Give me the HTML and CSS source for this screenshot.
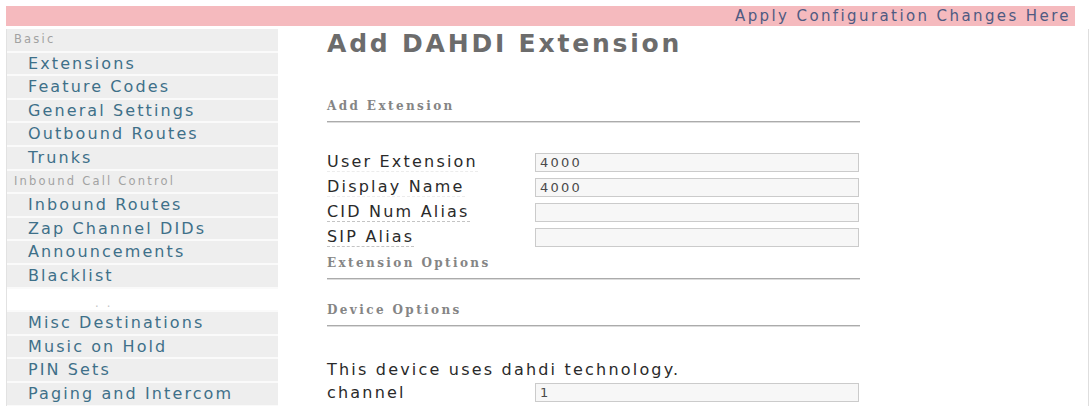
FILE: index.html
```html
<!DOCTYPE html>
<html>
<head>
    <title>Add DAHDI Extension</title>
    <link rel="stylesheet" href="styles.css">
</head>
<body>
    <div class="topbar">
        <a href="#" class="apply-link">Apply Configuration Changes Here</a>
    </div>

    <div class="layout">
        <div class="sidebar">
            <div class="nav-heading">Basic</div>
            <a href="#" class="nav-item">Extensions</a>
            <a href="#" class="nav-item">Feature Codes</a>
            <a href="#" class="nav-item">General Settings</a>
            <a href="#" class="nav-item">Outbound Routes</a>
            <a href="#" class="nav-item">Trunks</a>
            <div class="nav-heading">Inbound Call Control</div>
            <a href="#" class="nav-item">Inbound Routes</a>
            <a href="#" class="nav-item">Zap Channel DIDs</a>
            <a href="#" class="nav-item">Announcements</a>
            <a href="#" class="nav-item">Blacklist</a>
            <div class="nav-heading nav-heading-blank"><span>&middot; &middot;</span></div>
            <a href="#" class="nav-item">Misc Destinations</a>
            <a href="#" class="nav-item">Music on Hold</a>
            <a href="#" class="nav-item">PIN Sets</a>
            <a href="#" class="nav-item">Paging and Intercom</a>
        </div>

        <div class="content">
            <h1>Add DAHDI Extension</h1>

            <h5 class="section-title first">Add Extension</h5>
            <hr>

            <div class="fields">
                <div class="field-row">
                    <a href="#" class="info faint">User Extension</a>
                    <input type="text" value="4000">
                </div>
                <div class="field-row">
                    <a href="#" class="info faint">Display Name</a>
                    <input type="text" value="4000">
                </div>
                <div class="field-row">
                    <a href="#" class="info">CID Num Alias</a>
                    <input type="text" value="">
                </div>
                <div class="field-row">
                    <a href="#" class="info">SIP Alias</a>
                    <input type="text" value="">
                </div>
            </div>

            <h5 class="section-title">Extension Options</h5>
            <hr>

            <h5 class="section-title device">Device Options</h5>
            <hr>

            <p class="tech-note">This device uses dahdi technology.</p>
            <div class="field-row">
                <a href="#" class="info plain">channel</a>
                <input type="text" value="1">
            </div>
        </div>
    </div>
</body>
</html>
```

FILE: styles.css
```css
body {
    margin: 0;
    padding: 0;
    background-color: #ffffff;
    font-family: "DejaVu Sans", Verdana, sans-serif;
    color: #2a2a2a;
}

a {
    text-decoration: none;
}

.topbar {
    margin: 6px 0 0 6px;
    width: 1069px;
    height: 20px;
    background-color: #f5babe;
    text-align: right;
}

.apply-link {
    display: inline-block;
    padding-right: 4px;
    font-size: 15px;
    line-height: 20px;
    letter-spacing: 2.4px;
    color: #4f5a82;
}

.layout {
    display: flex;
    margin: 3px 0 0 6px;
    width: 1082px;
    height: 377px;
    border-right: 1px solid #dedede;
}

/* left navigation */
.sidebar {
    width: 271px;
    border-left: 1px solid #e2e2e2;
    display: flex;
    flex-direction: column;
}

.nav-heading,
.nav-item {
    display: block;
    height: 21.6px;
    line-height: 21.6px;
    background-color: #eeeeee;
    border-bottom: 2px solid #fafafa;
    white-space: nowrap;
}

.nav-heading {
    padding-left: 7px;
    font-size: 11.5px;
    letter-spacing: 2.2px;
    color: #a2a2a2;
}

.nav-heading-blank {
    background-color: #ffffff;
    padding-left: 88px;
    color: #c4c4c4;
    line-height: 36px;
}

.nav-item {
    padding-left: 21px;
    font-size: 16px;
    letter-spacing: 2.1px;
    color: #3e7089;
}

/* main form */
.content {
    margin-left: 49px;
    width: 533px;
}

h1 {
    margin: 0;
    font-size: 25px;
    line-height: 30px;
    letter-spacing: 2.8px;
    color: #6c6c6c;
}

.section-title {
    margin: 0;
    font-family: "DejaVu Serif", "Liberation Serif", serif;
    font-size: 12px;
    line-height: 16px;
    letter-spacing: 2.4px;
    color: #858585;
}

.section-title.first {
    margin-top: 39px;
}

.section-title.device {
    margin-top: 22px;
}

hr {
    margin: 7px 0 0 0;
    height: 0;
    border: 0;
    border-top: 1px solid #ababab;
    border-bottom: 1px solid #dcdcdc;
}

.fields {
    margin-top: 27px;
    margin-bottom: 5px;
}

.field-row {
    display: grid;
    grid-template-columns: 208px 324px;
    align-items: center;
    height: 25px;
}

.info {
    justify-self: start;
    font-size: 16px;
    line-height: 18px;
    letter-spacing: 2.2px;
    color: #2a2a2a;
    border-bottom: 1px dashed #c4c4c4;
}

.info.faint {
    border-bottom-color: #ececec;
}

.info.plain {
    border-bottom: 0;
}

input[type="text"] {
    box-sizing: border-box;
    width: 324px;
    height: 19px;
    margin: 0;
    padding: 0 4px;
    border: 1px solid #cbcbcb;
    background-color: #f7f7f7;
    font-family: "DejaVu Sans", Verdana, sans-serif;
    font-size: 13px;
    letter-spacing: 2.2px;
    color: #4a4a4a;
}

.tech-note {
    margin: 33px 0 0 0;
    font-size: 16px;
    line-height: 20px;
    letter-spacing: 2.2px;
    color: #2a2a2a;
}
```
